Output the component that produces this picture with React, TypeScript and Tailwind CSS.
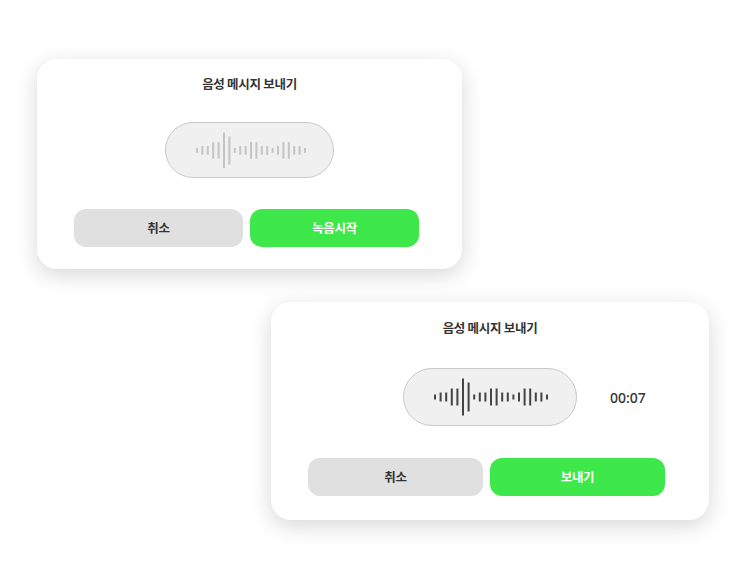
import React from 'react';

const BARS = [5, 9, 9, 17, 17, 37, 29, 5, 9, 9, 17, 17, 9, 9, 5, 9, 17, 17, 9, 9, 5];

const Waveform = ({ pitch, scale, color }: { pitch: number, scale: number, color: string }) => {
  const width = (BARS.length - 1) * pitch + 2;
  const height = 38 * scale;
  return (
    <svg width={width} height={height} viewBox={`0 0 ${width} ${height}`} className="ml-[2px]">
      {BARS.map((h, i) => {
        const bh = h * scale;
        return <rect key={i} x={i * pitch} y={(height - bh) / 2} width={2} height={bh} fill={color} />;
      })}
    </svg>
  );
};

const Title = () => (
  <h2 className="text-center text-[12.5px] leading-4 font-semibold text-[#333] tracking-[-0.3px]">
    음성 메시지 보내기
  </h2>
);

const Buttons = ({ label, width }: { label: string, width: string }) => (
  <div className={`ml-[37px] flex gap-[7px] ${width}`}>
    <button className="h-[38px] flex-1 rounded-[12px] bg-[#e0e0e0] text-[12.5px] font-bold text-[#333] tracking-[-0.3px]">
      취소
    </button>
    <button className="h-[38px] flex-1 rounded-[12px] bg-[#3fe84a] text-[12.5px] font-bold text-white tracking-[-0.3px]">
      {label}
    </button>
  </div>
);

const App = () => {
  return (
    <div
      className="w-[750px] h-[570px] bg-white pt-[59px]"
      style={{ fontFamily: '"Noto Sans CJK KR", "Noto Sans", sans-serif' }}
    >
      <div className="ml-[37px] w-[425px] h-[210px] rounded-[20px] bg-white shadow-[0_6px_22px_rgba(0,0,0,0.16)] pt-[17px] flex flex-col">
        <Title />
        <div className="mt-[30px] self-center w-[169px] h-[56px] rounded-full bg-[#f0f0f0] border border-[#c8c8c8] flex items-center justify-center">
          <Waveform pitch={5.4} scale={0.97} color="#c4c4c4" />
        </div>
        <div className="mt-[31px]">
          <Buttons label="녹음시작" width="w-[345px]" />
        </div>
      </div>

      <div className="mt-[33px] ml-[271px] w-[438px] h-[218px] rounded-[20px] bg-white shadow-[0_6px_22px_rgba(0,0,0,0.16)] pt-[18px] flex flex-col">
        <Title />
        <div className="mt-[32px] grid grid-cols-[1fr_auto_1fr] items-center">
          <div />
          <div className="w-[174px] h-[58px] rounded-full bg-[#f0f0f0] border border-[#c8c8c8] flex items-center justify-center">
            <Waveform pitch={5.6} scale={1} color="#444" />
          </div>
          <span className="pl-[33px] text-[14px] font-medium text-[#333]" style={{ fontFamily: '"Noto Sans", sans-serif' }}>
            00:07
          </span>
        </div>
        <div className="mt-[32px]">
          <Buttons label="보내기" width="w-[357px]" />
        </div>
      </div>
    </div>
  );
};

export default App;
